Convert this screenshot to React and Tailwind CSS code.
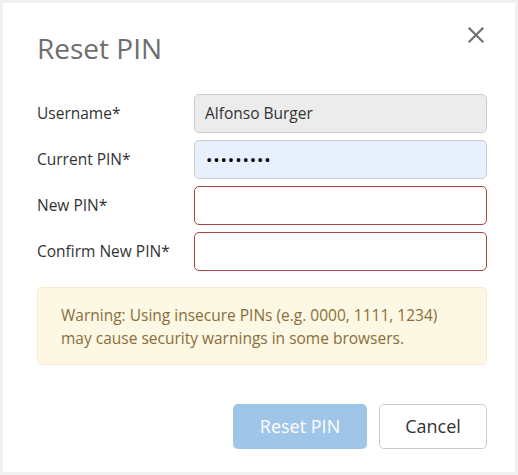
import React from "react";

export default function App() {
  return (
    <div className="w-[518px] h-[475px] bg-[#f0f0f0] p-[3px]" style={{ fontFamily: '"Open Sans", "Noto Sans", sans-serif' }}>
      <div className="w-[512px] h-[469px] bg-white relative pl-[34px] pr-[28px] pt-[27px]">
        <button className="absolute right-[29px] top-[22px] w-[20px] h-[20px] flex items-center justify-center">
          <svg width="16" height="16" viewBox="0 0 16 16" fill="none" stroke="#707070" strokeWidth="2.2" strokeLinecap="square">
            <path d="M1.5 1.5 L14.5 14.5 M14.5 1.5 L1.5 14.5" />
          </svg>
        </button>
        <h1 className="text-[28px] leading-[36px] text-[#6e6e6e] font-normal">Reset PIN</h1>
        <div className="mt-[28px] flex flex-col gap-[7px]">
          <div className="flex items-center">
            <label className="w-[157px] text-[15.5px] text-[#333]">Username*</label>
            <div className="flex-1 h-[39px] rounded-[5px] border border-[#cccccc] bg-[#ececec] flex items-center px-[10px] text-[15.5px] text-[#333]">Alfonso Burger</div>
          </div>
          <div className="flex items-center">
            <label className="w-[157px] text-[15.5px] text-[#333]">Current PIN*</label>
            <div className="flex-1 h-[39px] rounded-[5px] border border-[#cccccc] bg-[#e8f0fe] flex items-center px-[11px] text-[17px] text-black tracking-[0.9px]">•••••••••</div>
          </div>
          <div className="flex items-center">
            <label className="w-[157px] text-[15.5px] text-[#333]">New PIN*</label>
            <div className="flex-1 h-[39px] rounded-[5px] border border-[#a94442] bg-white"></div>
          </div>
          <div className="flex items-center">
            <label className="w-[157px] text-[15.5px] text-[#333]">Confirm New PIN*</label>
            <div className="flex-1 h-[39px] rounded-[5px] border border-[#a94442] bg-white"></div>
          </div>
        </div>
        <div className="mt-[16px] h-[78px] rounded-[5px] border border-[#faebcc] bg-[#fcf8e3] px-[23px] pt-[16px] text-[15.5px] leading-[23px] text-[#8a6d3b]">
          Warning: Using insecure PINs (e.g. 0000, 1111, 1234)
          <br />
          may cause security warnings in some browsers.
        </div>
        <div className="mt-[39px] flex justify-end gap-[12px]">
          <button className="w-[134px] h-[45px] rounded-[5px] bg-[#9fc5e8] text-white text-[18px]">Reset PIN</button>
          <button className="w-[108px] h-[45px] rounded-[5px] border border-[#cccccc] bg-white text-[#333] text-[18px]">Cancel</button>
        </div>
      </div>
    </div>
  );
}
